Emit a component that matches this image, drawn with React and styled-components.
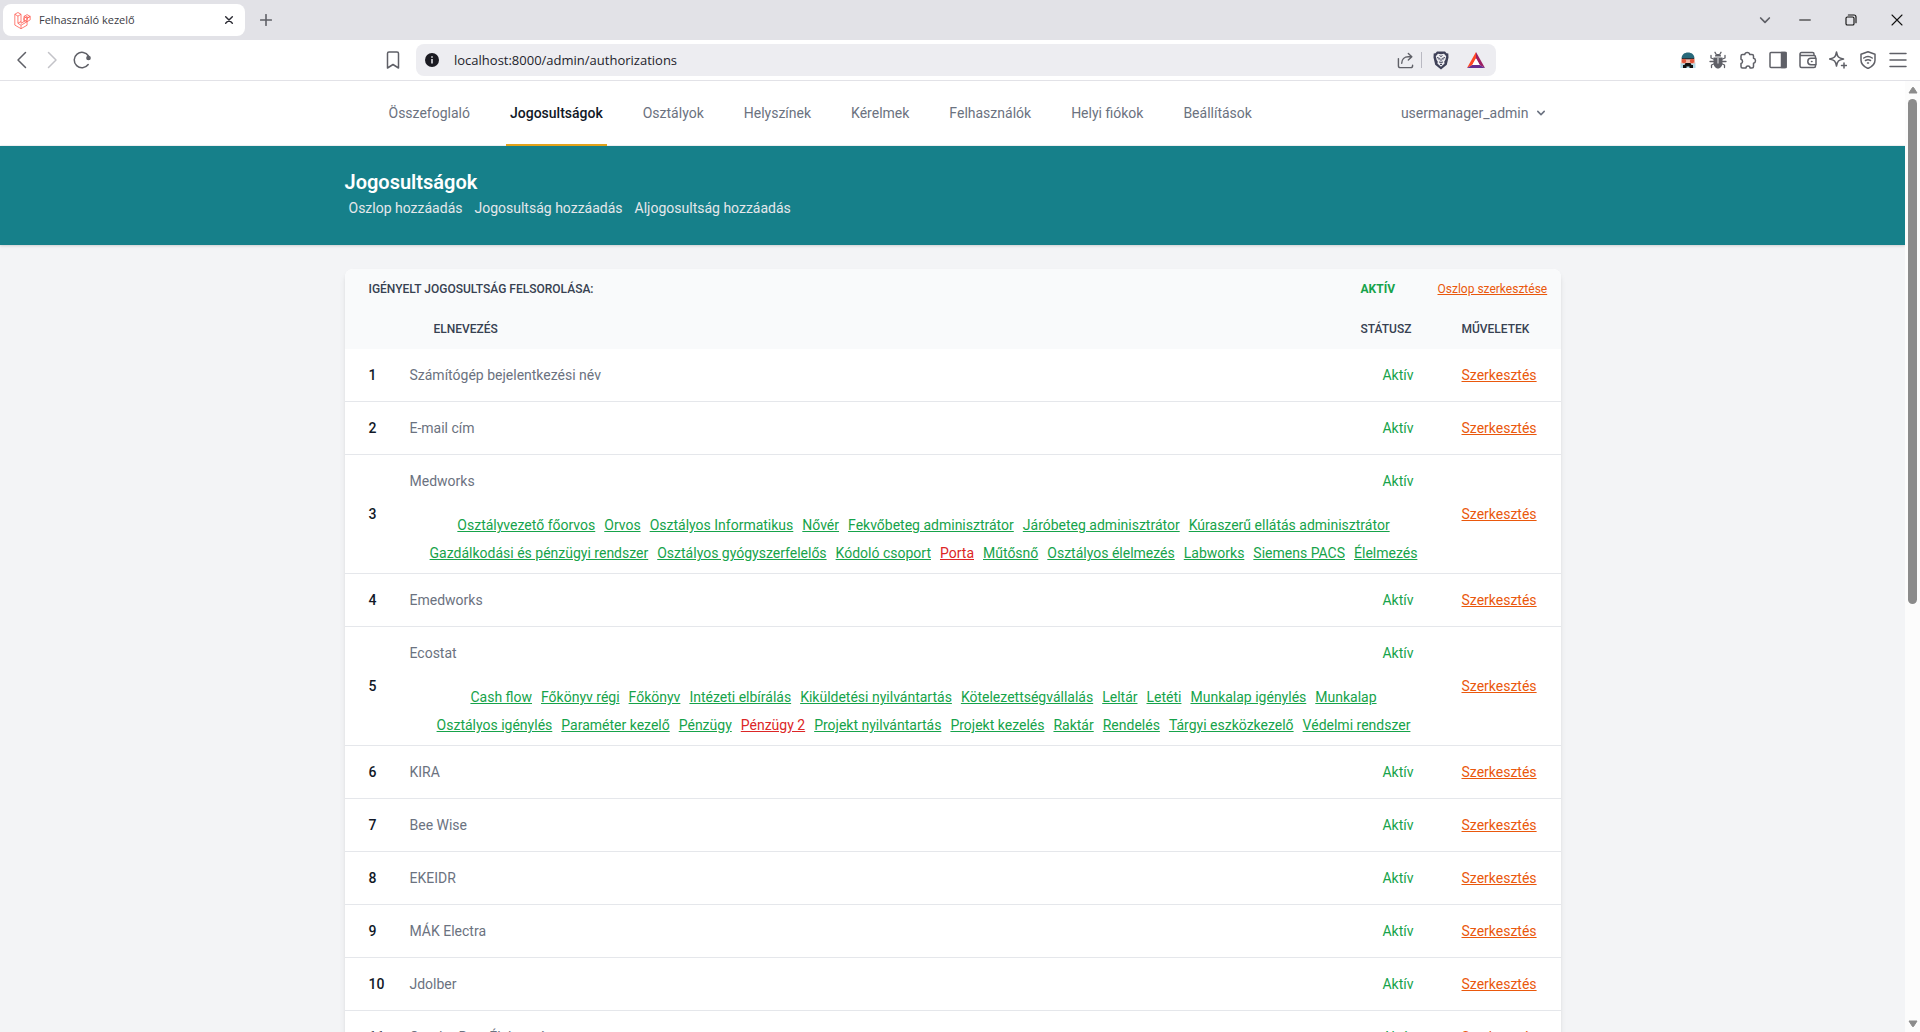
import React from "react";
import styled, { createGlobalStyle } from "styled-components";

const Global = createGlobalStyle`
  *, *::before, *::after { box-sizing: border-box; }
  body { margin: 0; overflow: hidden; font-family: Roboto, "Liberation Sans", sans-serif; font-size: 14px; line-height: 20px; color: #111827; }
  button, input { font: inherit; color: inherit; }
  a { color: inherit; }
  svg { display: block; flex: none; }
`;

const Window = styled.div`
  display: flex;
  flex-direction: column;
  height: 100vh;
  background: #f3f4f6;
`;

const IconButton = styled.button`
  display: flex;
  align-items: center;
  justify-content: center;
  width: ${(p) => p.$w || 30}px;
  height: ${(p) => p.$h || 32}px;
  padding: 0;
  border: 0;
  background: transparent;
  color: ${(p) => p.$color || "#5f6067"};
`;

const TabStrip = styled.div`
  display: flex;
  align-items: center;
  flex: none;
  height: 40px;
  padding: 0 0 0 3px;
  background: #e2e2e7;
`;

const Tab = styled.div`
  display: flex;
  align-items: center;
  gap: 8px;
  width: 242px;
  height: 32px;
  padding: 0 4px 0 11px;
  border-radius: 8px;
  background: #fff;
  color: #3b3b44;
  font-family: "Open Sans", "Noto Sans", sans-serif;
  font-size: 11px;
`;

const TabTitle = styled.span`
  flex: 1;
`;

const WindowControls = styled.div`
  display: flex;
  align-items: center;
  margin-left: auto;
`;

const Toolbar = styled.div`
  display: grid;
  grid-template-columns: 378px minmax(0, 1fr) 424px;
  align-items: center;
  flex: none;
  height: 41px;
  background: #fff;
  border-bottom: 1px solid #e2e2e7;
`;

const ToolGroup = styled.div`
  display: flex;
  align-items: center;
  justify-content: ${(p) => (p.$end ? "flex-end" : "flex-start")};
  padding: 0 7px;
`;

const Location = styled.div`
  display: flex;
  align-items: center;
  gap: 8px;
`;

const AddressBar = styled.div`
  display: flex;
  align-items: center;
  flex: 1;
  height: 32px;
  padding: 0 4px 0 1px;
  border-radius: 8px;
  background: #ededf1;
`;

const AddressInput = styled.input`
  flex: 1;
  min-width: 0;
  margin-left: 7px;
  padding: 0;
  border: 0;
  outline: 0;
  background: transparent;
  color: #23232b;
  font-family: "Open Sans", "Noto Sans", sans-serif;
  font-size: 13px;
`;

const Divider = styled.span`
  width: 1px;
  height: 16px;
  background: #b9b9c2;
`;

const Viewport = styled.div`
  display: flex;
  flex: 1;
  min-height: 0;
`;

const Page = styled.div`
  flex: 1;
  min-width: 0;
  overflow: hidden;
`;

const Scrollbar = styled.div`
  display: flex;
  flex-direction: column;
  align-items: center;
  width: 15px;
  padding: 5px 0 4px;
  background: #fcfcfc;
  color: #8b8b8b;
`;

const Track = styled.div`
  flex: 1;
  width: 9px;
  margin: 5px 0 3px;
`;

const Thumb = styled.div`
  height: 55%;
  border-radius: 5px;
  background: #8b8b8b;
`;

const Container = styled.div`
  max-width: 1280px;
  margin: 0 auto;
  padding: 0 32px;
`;

const NavBar = styled.nav`
  background: #fff;
  border-bottom: 1px solid #f3f4f6;
`;

const NavRow = styled(Container)`
  display: flex;
  justify-content: space-between;
  height: 64px;
`;

const NavLinks = styled.div`
  display: flex;
  gap: 32px;
  margin: 0 0 -1px 40px;
`;

const NavLink = styled.a`
  display: flex;
  align-items: center;
  padding: 0 4px;
  border-bottom: 2px solid ${(p) => (p.$active ? "#e3a21a" : "transparent")};
  color: ${(p) => (p.$active ? "#111827" : "#6b7280")};
  font-weight: ${(p) => (p.$active ? 500 : 400)};
  text-decoration: none;
`;

const UserButton = styled.button`
  display: flex;
  align-items: center;
  gap: 4px;
  padding: 0 12px;
  border: 0;
  background: transparent;
  color: #6b7280;
`;

const Banner = styled.header`
  padding: 24px 0;
  background: #16808a;
  box-shadow: 0 1px 3px rgba(0, 0, 0, 0.1), 0 1px 2px rgba(0, 0, 0, 0.06);
`;

const Title = styled.h2`
  margin: 0;
  color: #fff;
  font-size: 20px;
  font-weight: 600;
  line-height: 25px;
`;

const BannerLinks = styled.div`
  display: flex;
  gap: 12px;
  padding: 0 4px;
`;

const BannerLink = styled.a`
  color: #e5e7eb;
  line-height: 26px;
  text-decoration: none;
`;

const Main = styled(Container)`
  padding-top: 24px;
`;

const Card = styled.div`
  overflow: hidden;
  border-radius: 8px;
  background: #fff;
  box-shadow: 0 4px 6px -1px rgba(0, 0, 0, 0.1), 0 2px 4px -2px rgba(0, 0, 0, 0.1);
`;

const Table = styled.table`
  width: 100%;
  table-layout: fixed;
  border-collapse: separate;
  border-spacing: 0;
  color: #6b7280;
`;

const Col = styled.col`
  width: ${(p) => p.$w};
`;

const HeadCell = styled.th`
  height: 40px;
  padding: 0 ${(p) => (p.$flush ? 0 : 24)}px;
  background: #f9fafb;
  color: ${(p) => (p.$ok ? "#16a34a" : "#374151")};
  font-size: 12px;
  font-weight: ${(p) => (p.$ok ? 700 : 500)};
  line-height: 16px;
  text-align: left;
  text-transform: ${(p) => (p.$flush ? "none" : "uppercase")};
  white-space: nowrap;
`;

const Row = styled.tr`
  & > * {
    border-bottom: 1px solid #e5e7eb;
  }
`;

const Cell = styled.td`
  height: 53px;
  padding: 0 ${(p) => (p.$name ? 0 : 24)}px;
  text-align: ${(p) => (p.$right ? "right" : "left")};
  color: ${(p) => (p.$right ? "#16a34a" : "inherit")};
`;

const NumberCell = styled.th`
  padding: 0 24px;
  color: #111827;
  font-weight: 500;
  text-align: left;
`;

const GroupHead = styled.div`
  display: flex;
  align-items: center;
  justify-content: space-between;
  height: 52px;
  padding-right: 24px;
`;

const Status = styled.span`
  color: #16a34a;
`;

const SubLinks = styled.div`
  display: flex;
  flex-wrap: wrap;
  justify-content: center;
  gap: 0 9px;
  padding: 4px 12px 6px;
`;

const SubLink = styled.a`
  color: ${(p) => (p.$off ? "#dc2626" : "#16a34a")};
  line-height: 28px;
`;

const EditLink = styled.a`
  color: #ea580c;
  font-weight: 400;
`;

const navItems = ["Összefoglaló", "Jogosultságok", "Osztályok", "Helyszínek", "Kérelmek", "Felhasználók", "Helyi fiókok", "Beállítások"];
const actions = ["Oszlop hozzáadás", "Jogosultság hozzáadás", "Aljogosultság hozzáadás"];
const rows = [
  { name: "Számítógép bejelentkezési név" },
  { name: "E-mail cím" },
  {
    name: "Medworks",
    off: "Porta",
    subs: ["Osztályvezető főorvos", "Orvos", "Osztályos Informatikus", "Nővér", "Fekvőbeteg adminisztrátor", "Járóbeteg adminisztrátor", "Kúraszerű ellátás adminisztrátor", "Gazdálkodási és pénzügyi rendszer", "Osztályos gyógyszerfelelős", "Kódoló csoport", "Porta", "Műtősnő", "Osztályos élelmezés", "Labworks", "Siemens PACS", "Élelmezés"],
  },
  { name: "Emedworks" },
  {
    name: "Ecostat",
    off: "Pénzügy 2",
    subs: ["Cash flow", "Főkönyv régi", "Főkönyv", "Intézeti elbírálás", "Kiküldetési nyilvántartás", "Kötelezettségvállalás", "Leltár", "Letéti", "Munkalap igénylés", "Munkalap", "Osztályos igénylés", "Paraméter kezelő", "Pénzügy", "Pénzügy 2", "Projekt nyilvántartás", "Projekt kezelés", "Raktár", "Rendelés", "Tárgyi eszközkezelő", "Védelmi rendszer"],
  },
  { name: "KIRA" },
  { name: "Bee Wise" },
  { name: "EKEIDR" },
  { name: "MÁK Electra" },
  { name: "Jdolber" },
  { name: "Quadro Byte Élelmezés" },
];

const Line = ({ size = 18, w = 1.5, children, ...rest }) => (
  <svg width={size} height={size} viewBox="0 0 18 18" fill="none" stroke="currentColor" strokeWidth={w} strokeLinecap="round" strokeLinejoin="round" aria-hidden="true" {...rest}>
    {children}
  </svg>
);

const LaravelIcon = () => (
  <svg width="17" height="17" viewBox="0 0 50 52" fill="none" stroke="#ff5a4f" strokeWidth="2.4" strokeLinejoin="round" aria-hidden="true">
    <path d="M1.5 7 11 1.5 20.500 7v27.500L39 24V13.500L29.500 19v10.500M1.500 7v33L20.500 51 39 40.500V30M1.500 7 11 12.500 20.500 7M11 12.500v22L20.500 40.500V51M11 34.500l9.500 -5.500M20.500 40.500 48.500 24V13.500L39 19v11L29.500 24.500M29.500 13.500 39 8l9.500 5.500L39 19l-9.500-5.500v11" />
  </svg>
);

const BraveIcon = () => (
  <svg width="16" height="19" viewBox="0 0 16 19" aria-hidden="true">
    <path d="M4 .5h8l1.500 1.700 1.800.3.200 4-1.700 7.300L8 18.500l-5.800-4.700L.5 6.500l.200-4 1.800-.3z" fill="#3f4158" />
    <path d="M8 3.200 11 2.800l2.200 2.500-.8 3.500-1.200 2 .4 1.700L8 15.800l-3.600-3.300.4-1.700-1.200-2-.8-3.500L5 2.800z" fill="#ededf1" />
    <path d="M4 6.500l2.800 1M12 6.500l-2.800 1M8 7.500v3M6 10.800l2 1.200 2-1.200M5.500 8.200l1 .4M10.500 8.200l-1 .4M6.500 4.500 8 5.500l1.500-1M7 13.500h2" stroke="#3f4158" strokeWidth="1" fill="none" />
  </svg>
);

const BatIcon = () => (
  <svg width="18" height="16" viewBox="0 0 18 16" aria-hidden="true">
    <path d="M9 0 0 16l5.300-3L9 6.300z" fill="#ff4724" />
    <path d="M9 0l9 16-5.300-3L9 6.300z" fill="#9e1f63" />
    <path d="M0 16h18l-5.300-3H5.300z" fill="#662d91" />
    <path d="M9 6.300 12.700 13H5.300z" fill="#fff" />
  </svg>
);

const AgentIcon = () => (
  <svg width="16" height="16" viewBox="0 0 16 16" aria-hidden="true">
    <path d="M.5 16v-5.500h15V16z" fill="#b5dbe8" />
    <path d="M1.500 7C1.500 2.500 4.500.5 8 .5S14.500 2.500 14.500 7z" fill="#28697a" />
    <path d="M1 6.500h14v5H1z" fill="#f3b7a5" />
    <path d="M2 6h12v1.300H2z" fill="#26343c" />
    <circle cx="4" cy="9" r="2.200" fill="#e2573c" />
    <circle cx="12" cy="9" r="2.200" fill="#e2573c" />
    <path d="M5.500 11h5l1 2H13v3H9.500v-1.500h-3V16H3v-3h1.500z" fill="#111" />
  </svg>
);

const BugIcon = () => (
  <Line w={1.300}>
    <path d="M6 5.500C6 3.500 7 3 9 3s3 .5 3 2.500zM4.500 6.500h9v5C13.500 15 11.500 17.500 9 17.500s-4.500-2.500-4.500-6z" fill="currentColor" stroke="none" />
    <path d="M7 3 6 1.300M11 3l1-1.700M4.500 8 2 7V4.500M13.500 8 16 7V4.500M4.500 10.500H1M13.500 10.500H17M4.700 13 2.500 14v2.500M13.300 13l2.200 1v2.500" />
    <path d="M9 7.500V12" stroke="#c9c9ce" />
  </Line>
);

const Arrow = ({ down }) => (
  <svg width="10" height="8" viewBox="0 0 10 8" fill="currentColor" stroke="currentColor" strokeLinejoin="round" aria-hidden="true">
    <path d={down ? "M1 1h8L5.500 6.500h-1z" : "M1 7h8L5.500 1.500h-1z"} />
  </svg>
);

function BrowserChrome() {
  return (
    <>
      <TabStrip>
        <Tab>
          <LaravelIcon />
          <TabTitle>Felhasználó kezelő</TabTitle>
          <IconButton aria-label="Close tab" $w={24} $h={24} $color="#2b2b33">
            <Line size={10} w={2.600}><path d="M3 3l12 12M15 3 3 15" /></Line>
          </IconButton>
        </Tab>
        <IconButton aria-label="New tab" $w={42}>
          <Line size={12} w={2.400}><path d="M9 1v16M1 9h16" /></Line>
        </IconButton>
        <WindowControls>
          <IconButton aria-label="Search tabs" $w={34}>
            <Line size={12} w={2.600}><path d="M2.500 6 9 12.500 15.500 6" /></Line>
          </IconButton>
          <IconButton aria-label="Minimize" $w={46} $color="#111"><Line size={12} w={1.500}><path d="M1 9h16" /></Line></IconButton>
          <IconButton aria-label="Restore" $w={46} $color="#111">
            <Line size={12} w={1.700}><rect x="1.500" y="4.500" width="12" height="12" rx="2" /><path d="M5 1.500h8.500a3 3 0 0 1 3 3V13" /></Line>
          </IconButton>
          <IconButton aria-label="Close" $w={46} $color="#111"><Line size={12} w={1.600}><path d="M1.500 1.500l15 15M16.500 1.500l-15 15" /></Line></IconButton>
        </WindowControls>
      </TabStrip>
      <Toolbar>
        <ToolGroup>
          <IconButton aria-label="Back"><Line><path d="M12.500 1.500 5 9l7.500 7.500" /></Line></IconButton>
          <IconButton aria-label="Forward" $color="#c3c3c8"><Line><path d="M5.500 1.500 13 9l-7.500 7.500" /></Line></IconButton>
          <IconButton aria-label="Reload">
            <Line><path d="M15.200 13.500A7.700 7.700 0 1 1 15.500 5" /><circle cx="15.500" cy="7" r="1.600" fill="currentColor" /></Line>
          </IconButton>
        </ToolGroup>
        <Location>
          <IconButton aria-label="Bookmark"><Line><path d="M3.500 2.500a1.500 1.500 0 0 1 1.500-1.500h8a1.500 1.500 0 0 1 1.500 1.500V17L9 13.500 3.500 17z" /></Line></IconButton>
          <AddressBar>
            <IconButton aria-label="Site information" $color="#1b1b22">
              <svg width="14" height="14" viewBox="0 0 14 14" aria-hidden="true"><circle cx="7" cy="7" r="7" fill="currentColor" /><path d="M7 6v4.500M7 3.300v1.400" stroke="#ededf1" strokeWidth="1.500" /></svg>
            </IconButton>
            <AddressInput aria-label="Address" defaultValue="localhost:8000/admin/authorizations" />
            <IconButton aria-label="Share" $w={32}><Line size={17}><path d="M1.500 7v7.500a2 2 0 0 0 2 2h11a2 2 0 0 0 2-2V14M5 12c0-4.500 3-7 7-7h3.500M12 1.500 15.700 5 12 8.500" /></Line></IconButton>
            <Divider />
            <IconButton aria-label="Brave Shields" $w={38}><BraveIcon /></IconButton>
            <IconButton aria-label="Brave Rewards" $w={32}><BatIcon /></IconButton>
          </AddressBar>
        </Location>
        <ToolGroup $end>
          <IconButton aria-label="User agent"><AgentIcon /></IconButton>
          <IconButton aria-label="Debug extension"><BugIcon /></IconButton>
          <IconButton aria-label="Extensions"><Line><path d="M3.500 3.500h2.200a2.600 2.600 0 0 1 5.100 0H13a1.500 1.500 0 0 1 1.500 1.500v2.300a2.500 2.500 0 0 1 0 4.900V15.500A1.500 1.500 0 0 1 13 17h-2a2 2 0 0 0-4 0H3.500A1.500 1.500 0 0 1 2 15.500v-3a2.200 2.200 0 0 0 0-4.200V5a1.500 1.500 0 0 1 1.500-1.500z" /></Line></IconButton>
          <IconButton aria-label="Sidebar"><Line><rect x="1" y="1.500" width="16" height="15" rx="1" /><path d="M12.500 1.500H17v15h-4.500z" fill="currentColor" /></Line></IconButton>
          <IconButton aria-label="Wallet"><Line><path d="M16.500 7V6A1.500 1.500 0 0 0 15 4.500H2.500A1.500 1.500 0 0 1 1 3M1 3a1.500 1.500 0 0 1 1.500-1.500h11A1.500 1.500 0 0 1 15 3v1.500M1 3v12a1.500 1.500 0 0 0 1.500 1.500H15a1.500 1.500 0 0 0 1.500-1.500v-1M17 7.300h-5a3.200 3.200 0 0 0 0 6.400h5zM12.500 10.500h.5" /></Line></IconButton>
          <IconButton aria-label="Leo AI"><Line><path d="M7.500 1c.9 4.900 2 6.100 7 7-5 .9-6.100 2.100-7 7-.9-4.900-2-6.100-7-7 5-.9 6.100-2.100 7-7zM15 12v5M12.500 14.500h5" /></Line></IconButton>
          <IconButton aria-label="VPN"><Line><path d="M9 .8l7 2.400v6c0 4-3 6.500-7 8.300-4-1.800-7-4.300-7-8.300v-6zM4.800 7c2.600-1.800 5.800-1.800 8.400 0M6.500 9.500c1.600-1 3.400-1 5 0M8.500 12h1" /></Line></IconButton>
          <IconButton aria-label="Menu"><Line><path d="M1 2.500h16M1 9h16M1 15.500h16" /></Line></IconButton>
        </ToolGroup>
      </Toolbar>
    </>
  );
}

function AuthorizationRow({ row, index }) {
  return (
    <Row>
      <NumberCell scope="row">{index}</NumberCell>
      {row.subs ? (
        <Cell $name colSpan={2}>
          <GroupHead>
            <span>{row.name}</span>
            <Status>Aktív</Status>
          </GroupHead>
          <SubLinks>
            {row.subs.map((s) => (
              <SubLink key={s} href="#" $off={s === row.off}>{s}</SubLink>
            ))}
          </SubLinks>
        </Cell>
      ) : (
        <>
          <Cell $name>{row.name}</Cell>
          <Cell $right>Aktív</Cell>
        </>
      )}
      <Cell><EditLink href="#">Szerkesztés</EditLink></Cell>
    </Row>
  );
}

export default function App() {
  return (
    <Window>
      <Global />
      <BrowserChrome />
      <Viewport>
        <Page>
          <NavBar>
            <NavRow>
              <NavLinks>
                {navItems.map((item) => (
                  <NavLink key={item} href="#" $active={item === "Jogosultságok"}>{item}</NavLink>
                ))}
              </NavLinks>
              <UserButton>
                usermanager_admin
                <svg width="16" height="16" viewBox="0 0 20 20" fill="currentColor" aria-hidden="true">
                  <path fillRule="evenodd" d="M5.293 7.293a1 1 0 011.414 0L10 10.586l3.293-3.293a1 1 0 111.414 1.414l-4 4a1 1 0 01-1.414 0l-4-4a1 1 0 010-1.414z" />
                </svg>
              </UserButton>
            </NavRow>
          </NavBar>
          <Banner>
            <Container>
              <Title>Jogosultságok</Title>
              <BannerLinks>
                {actions.map((a) => <BannerLink key={a} href="#">{a}</BannerLink>)}
              </BannerLinks>
            </Container>
          </Banner>
          <Main as="main">
            <Card>
              <Table>
                <colgroup>
                  <Col $w="65px" />
                  <Col $w="auto" />
                  <Col $w="101px" />
                  <Col $w="123px" />
                </colgroup>
                <thead>
                  <tr>
                    <HeadCell colSpan={2}>Igényelt jogosultság felsorolása:</HeadCell>
                    <HeadCell $ok>Aktív</HeadCell>
                    <HeadCell $flush><EditLink href="#">Oszlop szerkesztése</EditLink></HeadCell>
                  </tr>
                  <tr>
                    <HeadCell aria-label="Sorszám" />
                    <HeadCell>Elnevezés</HeadCell>
                    <HeadCell>Státusz</HeadCell>
                    <HeadCell>Műveletek</HeadCell>
                  </tr>
                </thead>
                <tbody>
                  {rows.map((row, i) => <AuthorizationRow key={row.name} row={row} index={i + 1} />)}
                </tbody>
              </Table>
            </Card>
          </Main>
        </Page>
        <Scrollbar aria-hidden="true">
          <Arrow />
          <Track><Thumb /></Track>
          <Arrow down />
        </Scrollbar>
      </Viewport>
    </Window>
  );
}
